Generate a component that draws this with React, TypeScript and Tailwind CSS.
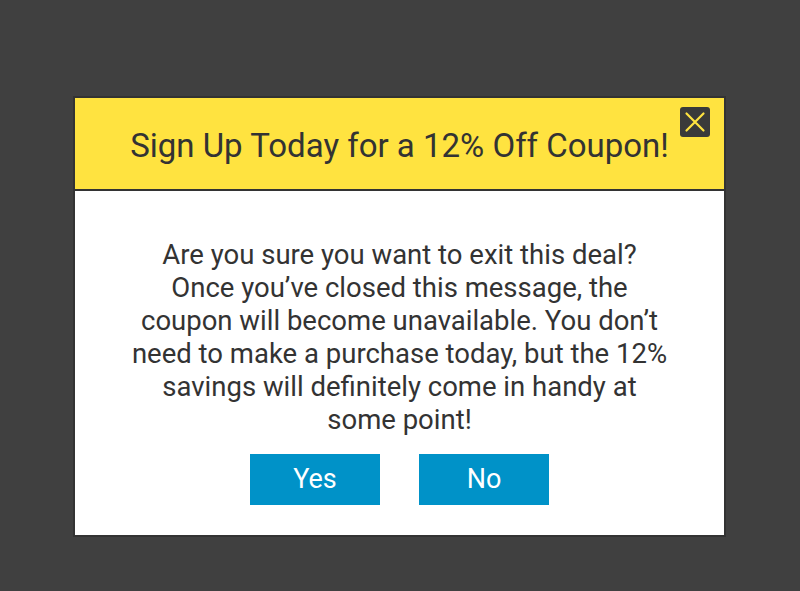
export default function App() {
  return (
    <div className="w-[800px] h-[591px] bg-[#404040] pt-[96px] font-['Roboto',sans-serif]">
      <div className="ml-[73px] w-[653px] h-[441px] border-2 border-[#333333] bg-white flex flex-col">
        <div className="relative h-[93px] bg-[#FFE340] border-b-2 border-[#333333] flex items-center justify-center">
          <h1 className="text-[33px] text-[#333333] leading-none pt-[4px]">Sign Up Today for a 12% Off Coupon!</h1>
          <button className="absolute right-[14px] top-[9px] w-[30px] h-[30px] rounded-[3px] bg-[#3a3a3a] flex items-center justify-center">
            <svg width="22" height="22" viewBox="0 0 22 22">
              <path d="M2.5 2.5 L19.5 19.5 M19.5 2.5 L2.5 19.5" stroke="#FFE340" strokeWidth="2.2" strokeLinecap="round" />
            </svg>
          </button>
        </div>
        <div className="flex-1 flex flex-col items-center pt-[47px]">
          <p className="text-[27.5px] leading-[33px] text-[#333333] text-center">
            Are you sure you want to exit this deal?
            <br />
            Once you’ve closed this message, the
            <br />
            coupon will become unavailable. You don’t
            <br />
            need to make a purchase today, but the 12%
            <br />
            savings will definitely come in handy at
            <br />
            some point!
          </p>
          <div className="flex gap-[39px] mt-[18px]">
            <button className="w-[130px] h-[51px] bg-[#0092C8] text-white text-[27px]">Yes</button>
            <button className="w-[130px] h-[51px] bg-[#0092C8] text-white text-[27px]">No</button>
          </div>
        </div>
      </div>
    </div>
  );
}
